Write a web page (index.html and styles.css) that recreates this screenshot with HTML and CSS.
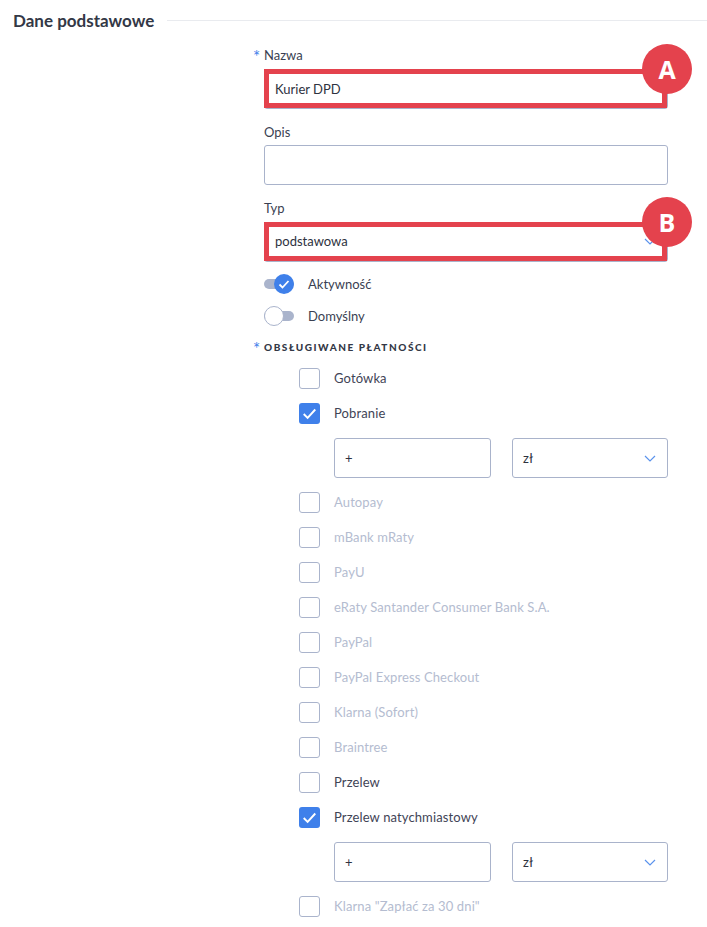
FILE: index.html
```html
<!DOCTYPE html>
<html lang="en">
<head>
    <meta charset="UTF-8">
    <title>Dane podstawowe</title>
    <link rel="stylesheet" href="styles.css">
</head>
<body>
    <div class="section-head">
        <h2>Dane podstawowe</h2>
        <div class="section-line"></div>
    </div>

    <form class="form">
        <div class="field field-name">
            <label class="required">Nazwa</label>
            <div class="control marked">
                <div class="input">Kurier DPD</div>
                <div class="mark"></div>
                <div class="badge">A</div>
            </div>
        </div>

        <div class="field field-desc">
            <label>Opis</label>
            <div class="input"></div>
        </div>

        <div class="field field-type">
            <label>Typ</label>
            <div class="control marked">
                <div class="input select">
                    podstawowa
                    <svg class="chevron" viewBox="0 0 12 7"><path d="M1 1l5 5 5-5"/></svg>
                </div>
                <div class="mark"></div>
                <div class="badge">B</div>
            </div>
        </div>

        <div class="toggles">
            <div class="toggle-row">
                <span class="toggle on">
                    <span class="knob">
                        <svg viewBox="0 0 20 20"><path d="M5.5 10.5l3 3 6-6.5"/></svg>
                    </span>
                </span>
                Aktywność
            </div>
            <div class="toggle-row">
                <span class="toggle"><span class="knob"></span></span>
                Domyślny
            </div>
        </div>

        <div class="caps required">Obsługiwane płatności</div>

        <div class="payments">
            <div class="pay"><span class="check"></span>Gotówka</div>
            <div class="pay">
                <span class="check checked"><svg viewBox="0 0 20 20"><path d="M4.5 10.5l3.7 3.7 7.3-8"/></svg></span>Pobranie
            </div>
            <div class="pay-extra">
                <div class="input">+</div>
                <div class="input select">
                    zł
                    <svg class="chevron" viewBox="0 0 12 7"><path d="M1 1l5 5 5-5"/></svg>
                </div>
            </div>
            <div class="pay off"><span class="check"></span>Autopay</div>
            <div class="pay off"><span class="check"></span>mBank mRaty</div>
            <div class="pay off"><span class="check"></span>PayU</div>
            <div class="pay off"><span class="check"></span>eRaty Santander Consumer Bank S.A.</div>
            <div class="pay off"><span class="check"></span>PayPal</div>
            <div class="pay off"><span class="check"></span>PayPal Express Checkout</div>
            <div class="pay off"><span class="check"></span>Klarna (Sofort)</div>
            <div class="pay off"><span class="check"></span>Braintree</div>
            <div class="pay"><span class="check"></span>Przelew</div>
            <div class="pay">
                <span class="check checked"><svg viewBox="0 0 20 20"><path d="M4.5 10.5l3.7 3.7 7.3-8"/></svg></span>Przelew natychmiastowy
            </div>
            <div class="pay-extra">
                <div class="input">+</div>
                <div class="input select">
                    zł
                    <svg class="chevron" viewBox="0 0 12 7"><path d="M1 1l5 5 5-5"/></svg>
                </div>
            </div>
            <div class="pay off"><span class="check"></span>Klarna "Zapłać za 30 dni"</div>
        </div>
    </form>
</body>
</html>
```

FILE: styles.css
```css
* {
    margin: 0;
    padding: 0;
    box-sizing: border-box;
}

body {
    font-family: Lato, "Noto Sans", sans-serif;
    font-size: 13px;
    color: #3a3f52;
    background: #fff;
    height: 927px;
    overflow: hidden;
}

/* Section heading */
.section-head {
    display: flex;
    align-items: center;
    gap: 13px;
    padding: 11px 0 0 13px;
}

.section-head h2 {
    font-size: 17px;
    font-weight: 700;
    line-height: 20px;
    color: #333846;
}

.section-line {
    flex: 1;
    height: 1px;
    background: #e9ebef;
    margin-top: -2px;
}

/* Form */
.form {
    width: 404px;
    margin: 15px 0 0 264px;
}

.field label {
    display: block;
    line-height: 18px;
    margin-bottom: 5px;
}

.field-desc {
    margin-top: 14px;
}

.field-desc label {
    margin-bottom: 4px;
}

.field-type {
    margin-top: 14px;
}

.required {
    position: relative;
}

.required::before {
    content: "*";
    position: absolute;
    left: -11px;
    top: 2px;
    color: #3f80ea;
    font-size: 17px;
    font-weight: 400;
    letter-spacing: 0;
}

.input {
    display: flex;
    align-items: center;
    justify-content: space-between;
    height: 40px;
    padding: 0 10px;
    border: 1px solid #a9b3cb;
    border-radius: 3px;
    background: #fff;
    color: #2e3240;
}

.control .select {
    padding-bottom: 2px;
}

.chevron {
    width: 12px;
    height: 7px;
    margin-right: 1px;
    fill: none;
    stroke: #5b93ec;
    stroke-width: 1.2;
}

/* Red annotations over the fields */
.control {
    position: relative;
}

.mark {
    position: absolute;
    top: 0;
    left: 0;
    right: 1px;
    bottom: 1px;
    border: 5px solid #e4424d;
}

.badge {
    position: absolute;
    right: -24px;
    top: -25px;
    width: 50px;
    height: 50px;
    border-radius: 50%;
    background: #e4424d;
    color: #fff;
    font-family: "Open Sans", sans-serif;
    font-size: 25px;
    font-weight: 700;
    line-height: 50px;
    text-align: center;
}

/* Toggles */
.toggles {
    display: flex;
    flex-direction: column;
    gap: 12px;
    margin-top: 12px;
}

.toggle-row {
    display: flex;
    align-items: center;
    gap: 14px;
    height: 20px;
}

.toggle {
    position: relative;
    display: block;
    width: 30px;
    height: 10px;
    border-radius: 5px;
    background: #aab4cc;
}

.knob {
    position: absolute;
    top: -5px;
    left: 0;
    width: 20px;
    height: 20px;
    border-radius: 50%;
    background: #fff;
    border: 1px solid #aab4cc;
}

.toggle.on .knob {
    left: 10px;
    background: #3f80ea;
    border: 0;
}

.knob svg {
    display: block;
    fill: none;
    stroke: #fff;
    stroke-width: 1.8;
}

/* Payments */
.caps {
    margin-top: 14px;
    font-size: 10px;
    font-weight: 900;
    line-height: 14px;
    letter-spacing: 1.55px;
    text-transform: uppercase;
    color: #333846;
}

.payments {
    display: flex;
    flex-direction: column;
    gap: 14px;
    margin: 14px 0 0 35px;
}

.pay {
    display: flex;
    align-items: center;
    gap: 14px;
    height: 21px;
    letter-spacing: 0.12px;
    padding-bottom: 1px;
    color: #3f4456;
}

.pay.off {
    color: #b4bcd0;
}

.check {
    flex: none;
    width: 21px;
    height: 21px;
    border: 1px solid #aab4cc;
    border-radius: 3px;
    background: #fff;
}

.check.checked {
    border: 0;
    background: #3f80ea;
}

.check svg {
    display: block;
    fill: none;
    stroke: #fff;
    stroke-width: 1.8;
}

.pay-extra {
    display: grid;
    grid-template-columns: 157px 156px;
    gap: 21px;
    margin-left: 35px;
}
```
